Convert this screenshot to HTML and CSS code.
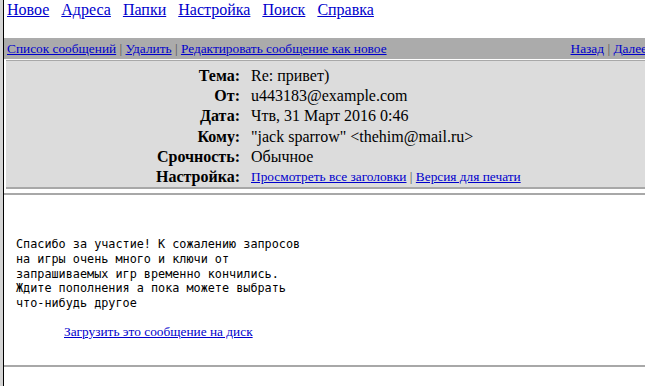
FILE: index.html
```html
<!DOCTYPE html>
<html lang="ru">
<head>
    <meta charset="UTF-8">
    <title>Просмотр сообщения</title>
    <link rel="stylesheet" href="styles.css">
</head>
<body>
    <div class="frame">
        <div class="menu">
            <a href="#">Новое</a>
            <a href="#">Адреса</a>
            <a href="#">Папки</a>
            <a href="#">Настройка</a>
            <a href="#">Поиск</a>
            <a href="#">Справка</a>
        </div>

        <div class="toolbar">
            <div class="left">
                <a href="#">Список сообщений</a> | <a href="#">Удалить</a> | <a href="#">Редактировать сообщение как новое</a>
            </div>
            <div class="right">
                <a href="#">Назад</a> | <a href="#">Далее</a>
            </div>
        </div>

        <div class="headers">
            <div class="label">Тема:</div><div class="value">Re: привет)</div>
            <div class="label">От:</div><div class="value">u443183@example.com</div>
            <div class="label">Дата:</div><div class="value">Чтв, 31 Март 2016 0:46</div>
            <div class="label">Кому:</div><div class="value">"jack sparrow" &lt;thehim@mail.ru&gt;</div>
            <div class="label">Срочность:</div><div class="value">Обычное</div>
            <div class="label">Настройка:</div><div class="value small"><a href="#">Просмотреть все заголовки</a> | <a href="#">Версия для печати</a></div>
        </div>

        <div class="message">
            <pre class="text">Спасибо за участие! К сожалению запросов
на игры очень много и ключи от
запрашиваемых игр временно кончились.
Ждите пополнения а пока можете выбрать
что-нибудь другое</pre>
            <div class="download"><a href="#">Загрузить это сообщение на диск</a></div>
        </div>
    </div>
</body>
</html>
```

FILE: styles.css
```css
html, body {
    margin: 0;
    padding: 0;
    height: 100%;
}

body {
    font-family: "Liberation Serif", "Times New Roman", serif;
    font-size: 16px;
    color: #000;
    background: #fff;
    border-left: 3px solid #d4d4d4;
    overflow: hidden;
}

a {
    color: #0000cc;
}

.frame {
    border-left: 1px solid #000;
    min-height: 100%;
}

.menu {
    display: flex;
    gap: 12px;
    padding: 0 0 0 3px;
    height: 38px;
    line-height: 19px;
}

.toolbar {
    display: flex;
    justify-content: space-between;
    align-items: center;
    background: #ababab;
    height: 21px;
    font-size: 13.33px;
    padding-left: 3px;
    margin-right: -2px;
    color: #555;
    white-space: nowrap;
}

.headers {
    display: grid;
    grid-template-columns: 234px auto;
    column-gap: 11px;
    align-items: center;
    background: #dcdcdc;
    margin: 1px 0 0 2px;
    border-top: 1px solid #a8a8a8;
    border-bottom: 2px solid #a8a8a8;
    padding: 5px 0 0;
}

.label {
    text-align: right;
    font-weight: bold;
    height: 20.2px;
    line-height: 20.2px;
}

.value {
    height: 20.2px;
    line-height: 20.2px;
}

.value.small {
    font-size: 13.33px;
    color: #555;
}

.message {
    margin-top: 4px;
    border-top: 2px solid #a8a8a8;
    border-bottom: 2px solid #a8a8a8;
    height: 170px;
    padding-left: 12px;
}

.text {
    font-family: "DejaVu Sans Mono", monospace;
    font-size: 11.8px;
    line-height: 14.7px;
    margin: 42px 0 0 0;
}

.download {
    font-size: 13.33px;
    margin: 13px 0 0 48px;
}
```
